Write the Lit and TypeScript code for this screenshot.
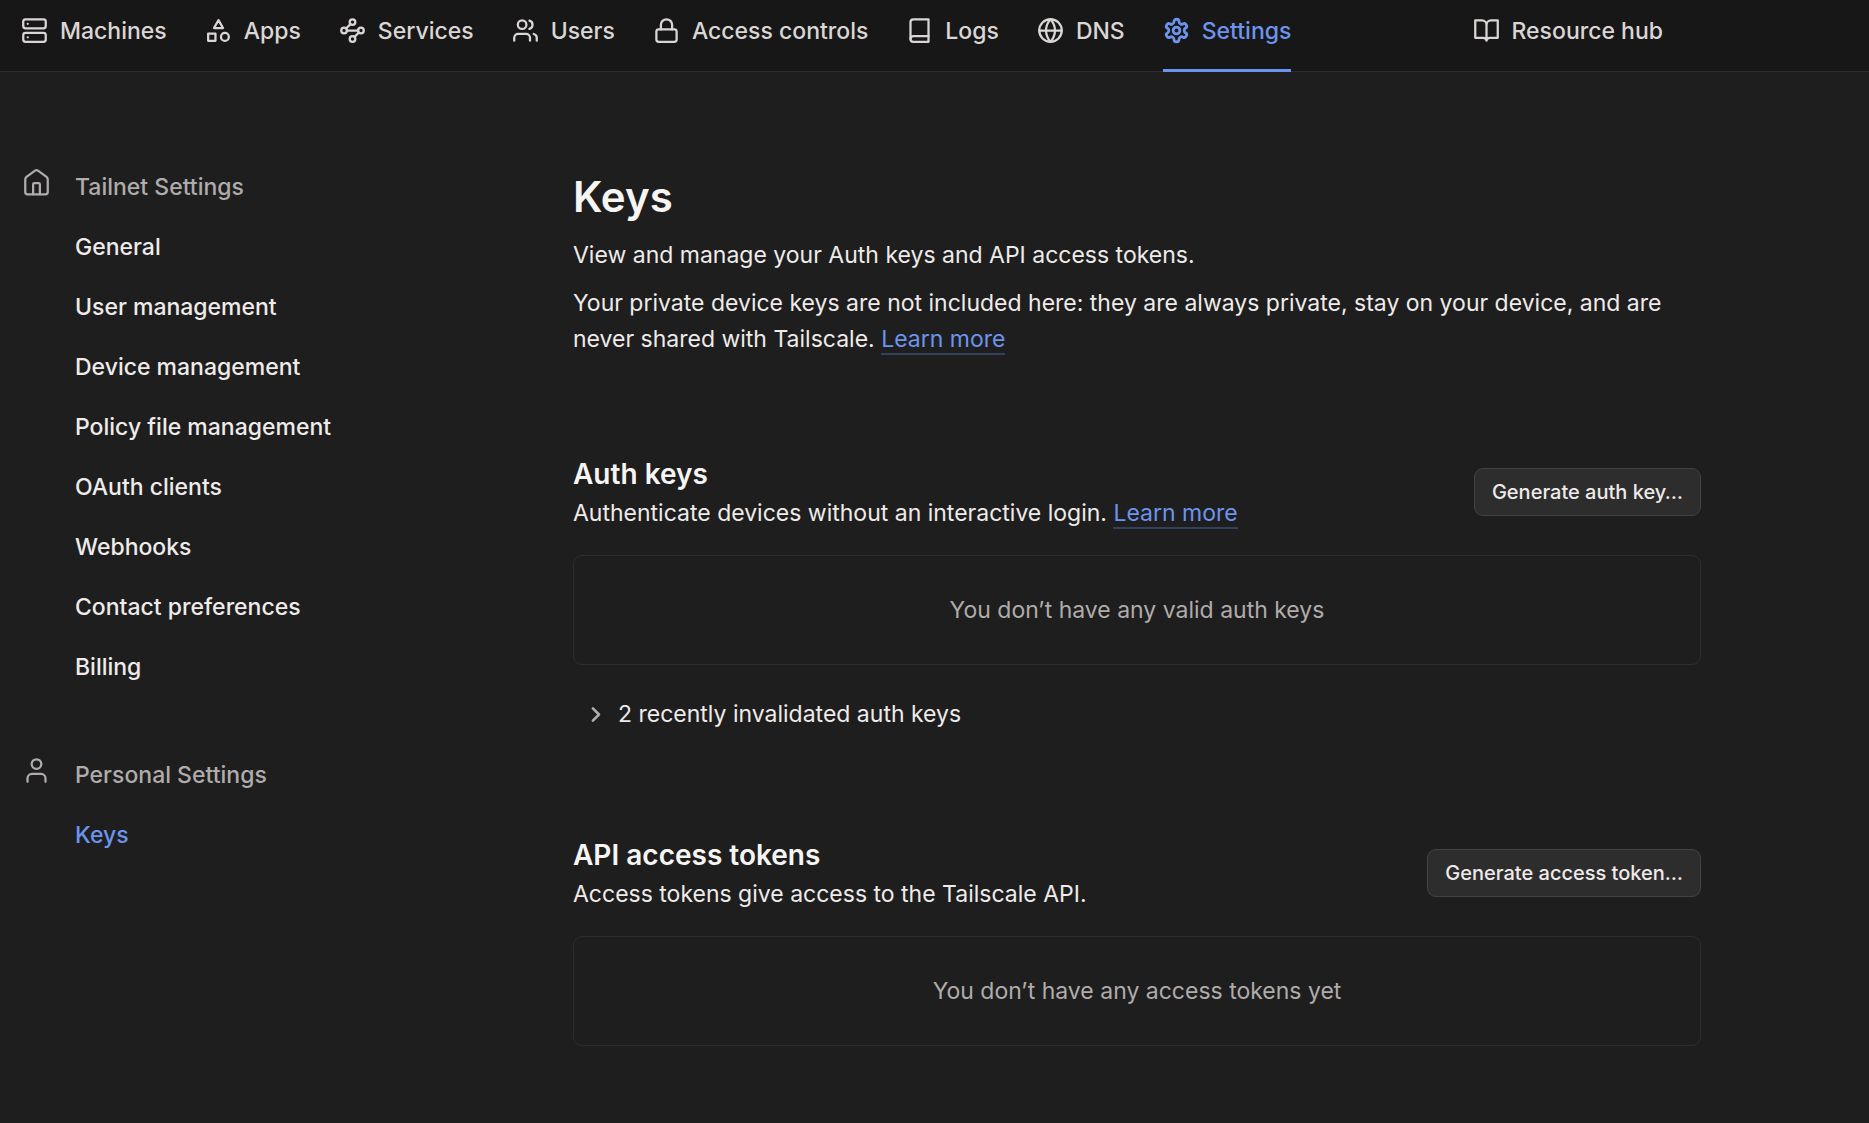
import { LitElement, html, svg, css, nothing } from "lit";
import { customElement } from "lit/decorators.js";

const icons: Record<string, unknown> = {
  server: svg`<rect x="2" y="2" width="20" height="8" rx="2"/><rect x="2" y="14" width="20" height="8" rx="2"/><path d="M6 6h.01M6 18h.01"/>`,
  apps: svg`<path d="M12 2.800 8 9.800h8z"/><rect x="2.800" y="14.700" width="6.500" height="6.500"/><circle cx="17.700" cy="17.700" r="3.500"/>`,
  services: svg`<circle cx="12" cy="4.500" r="2.500"/><circle cx="4.500" cy="12" r="2.500"/><circle cx="19.500" cy="12" r="2.500"/><circle cx="12" cy="19.500" r="2.500"/><path d="M7 12h10M6.300 10.200l3.900-3.900M13.800 17.700l3.900-3.900"/>`,
  users: svg`<path d="M16 21v-2.500a3.500 3.500 0 0 0-3.500-3.500h-7A3.500 3.500 0 0 0 2 18.500V21"/><circle cx="9" cy="6.800" r="3.800"/><path d="M22 21v-2.500a3.500 3.500 0 0 0-2.700-3.400M15.500 3.200a3.800 3.800 0 0 1 0 7.300"/>`,
  lock: svg`<rect x="3" y="11" width="18" height="11" rx="2"/><path d="M7 11V7a5 5 0 0 1 10 0v4"/>`,
  book: svg`<path d="M4 19.500A2.500 2.500 0 0 1 6.500 17H20"/><path d="M6.500 2H20v20H6.500A2.500 2.500 0 0 1 4 19.500v-15A2.500 2.500 0 0 1 6.500 2z"/>`,
  globe: svg`<circle cx="12" cy="12" r="10"/><path d="M2 12h20M12 2a15.300 15.300 0 0 1 4 10 15.300 15.300 0 0 1-4 10 15.300 15.300 0 0 1-4-10 15.300 15.300 0 0 1 4-10z"/>`,
  gear: svg`<circle cx="12" cy="12" r="3"/><path d="M12.22 2h-.44a2 2 0 0 0-2 2v.18a2 2 0 0 1-1 1.73l-.43.25a2 2 0 0 1-2 0l-.15-.08a2 2 0 0 0-2.73.73l-.22.38a2 2 0 0 0 .73 2.73l.15.1a2 2 0 0 1 1 1.72v.51a2 2 0 0 1-1 1.74l-.15.09a2 2 0 0 0-.73 2.73l.22.38a2 2 0 0 0 2.73.73l.15-.08a2 2 0 0 1 2 0l.43.25a2 2 0 0 1 1 1.73V20a2 2 0 0 0 2 2h.44a2 2 0 0 0 2-2v-.18a2 2 0 0 1 1-1.73l.43-.25a2 2 0 0 1 2 0l.15.08a2 2 0 0 0 2.73-.73l.22-.39a2 2 0 0 0-.73-2.73l-.15-.08a2 2 0 0 1-1-1.74v-.5a2 2 0 0 1 1-1.74l.15-.09a2 2 0 0 0 .73-2.73l-.22-.38a2 2 0 0 0-2.73-.73l-.15.08a2 2 0 0 1-2 0l-.43-.25a2 2 0 0 1-1-1.73V4a2 2 0 0 0-2-2z"/>`,
  openBook: svg`<path d="M2 3h6a4 4 0 0 1 4 4v14a3 3 0 0 0-3-2.500H2zM22 3h-6a4 4 0 0 0-4 4v14a3 3 0 0 1 3-2.500h7z"/>`,
  home: svg`<path d="M2 9.300a3 3 0 0 1 1.100-2.300L10.700 1.500a2 2 0 0 1 2.600 0L20.900 7a3 3 0 0 1 1.100 2.300V20.500a2 2 0 0 1-2 2H4a2 2 0 0 1-2-2z"/><path d="M9 22.500V13.500a1 1 0 0 1 1-1h4a1 1 0 0 1 1 1v9"/>`,
  user: svg`<path d="M20 22v-3a4 4 0 0 0-4-4H8a4 4 0 0 0-4 4v3"/><circle cx="12" cy="6.300" r="4.300"/>`,
  chevron: svg`<path d="M9 5l7 7-7 7"/>`,
};

const icon = (name: string) =>
  html`<svg class="icon ${name}" viewBox="0 0 24 24" aria-hidden="true">${icons[name]}</svg>`;

const tabs = [
  ["server", "Machines"],
  ["apps", "Apps"],
  ["services", "Services"],
  ["users", "Users"],
  ["lock", "Access controls"],
  ["book", "Logs"],
  ["globe", "DNS"],
  ["gear", "Settings"],
];

const groups = [
  {
    icon: "home",
    title: "Tailnet Settings",
    items: [
      "General",
      "User management",
      "Device management",
      "Policy file management",
      "OAuth clients",
      "Webhooks",
      "Contact preferences",
      "Billing",
    ],
  },
  { icon: "user", title: "Personal Settings", items: ["Keys"] },
];

@customElement("app-root")
export class AppRoot extends LitElement {
  static styles = css`
    :host {
      display: block;
      min-height: 100vh;
      box-sizing: border-box;
      background: #1f1e1e;
      color: #eeebea;
      font: 400 23px/36px Inter, "Liberation Sans", sans-serif;
    }
    * { box-sizing: border-box; }
    a { color: inherit; text-decoration: none; }
    h1, h2, p, ul { margin: 0; padding: 0; }
    ul { list-style: none; }
    .icon {
      flex: none;
      width: 27px;
      height: 27px;
      overflow: visible;
      fill: none;
      stroke: currentColor;
      stroke-width: 2;
      stroke-linecap: round;
      stroke-linejoin: round;
    }
    .topbar {
      display: flex;
      height: 72px;
      padding: 0 206px 0 21px;
      background: #181717;
      border-bottom: 1px solid #2e2d2d;
      color: #dad6d5;
      font-weight: 500;
    }
    .tabs { display: flex; gap: 38px; }
    .tab {
      display: flex;
      align-items: center;
      gap: 12px;
      height: 72px;
      padding-bottom: 8px;
      border-bottom: 3px solid transparent;
      white-space: nowrap;
    }
    .tab.active { color: #6d94ec; border-color: #6d94ec; }
    .tab.active .icon { stroke-width: 2.5; }
    .hub { margin-left: auto; }
    .page {
      display: grid;
      grid-template-columns: 552px minmax(0, 1128px);
      padding: 97px 21px 77px;
    }
    .sidebar {
      display: flex;
      flex-direction: column;
      gap: 72px;
      padding-left: 2px;
      font-weight: 500;
    }
    .group { display: grid; grid-template-columns: 27px 1fr; gap: 0 25px; }
    .sidebar .icon { color: #afacab; }
    .group-title { color: #afacab; font-size: 23px; font-weight: 500; line-height: 36px; }
    .links { grid-column: 2; }
    .links a { display: block; padding-top: 24px; }
    .links .current { color: #6d94ec; }
    h1 { font-size: 42px; line-height: 56px; font-weight: 600; color: #f7f5f4; }
    h2 { font-size: 28px; line-height: 36px; font-weight: 600; color: #f7f5f4; }
    .intro { display: flex; flex-direction: column; gap: 12px; }
    .more { color: #6d94ec; border-bottom: 2px solid #33415f; }
    .section { margin-top: 99px; }
    .section-head {
      display: flex;
      justify-content: space-between;
      align-items: center;
      margin-bottom: 24px;
    }
    .section-text { display: flex; flex-direction: column; gap: 3px; }
    .button {
      height: 48px;
      padding: 0 17px;
      border: 1px solid #434242;
      border-radius: 9px;
      background: #2e2d2d;
      color: #eeebea;
      font: 500 20px/30px Inter, "Liberation Sans", sans-serif;
    }
    .section-head .button { margin-bottom: 4px; }
    .empty {
      padding: 36px;
      border: 1px solid #2e2d2d;
      border-radius: 9px;
      color: #afacab;
      text-align: center;
    }
    .toggle {
      display: flex;
      align-items: center;
      gap: 12px;
      margin-top: 25px;
      padding: 6px 0 6px 12px;
      border: 0;
      background: none;
      color: inherit;
      font: inherit;
    }
    .toggle .icon { width: 21px; height: 21px; stroke-width: 3; color: #afacab; }
  `;

  private tab(name: string, label: string, extra = "") {
    const active = label === "Settings";
    return html`<a class="tab ${active ? "active" : ""} ${extra}" href="#"
      aria-current=${active ? "page" : nothing}>${icon(name)}<span>${label}</span></a>`;
  }

  private section(title: string, text: unknown, action: string, empty: string, footer: unknown = nothing) {
    return html`<section class="section">
      <div class="section-head">
        <div class="section-text"><h2>${title}</h2><p>${text}</p></div>
        <button class="button" type="button">${action}</button>
      </div>
      <div class="empty">${empty}</div>
      ${footer}
    </section>`;
  }

  render() {
    const more = html`<a class="more" href="#">Learn more</a>`;
    return html`
      <header class="topbar">
        <nav class="tabs" aria-label="Main">${tabs.map(([n, l]) => this.tab(n, l))}</nav>
        ${this.tab("openBook", "Resource hub", "hub")}
      </header>
      <div class="page">
        <nav class="sidebar" aria-label="Settings">
          ${groups.map((g) => html`<div class="group">
            ${icon(g.icon)}
            <h2 class="group-title">${g.title}</h2>
            <ul class="links">
              ${g.items.map((i) => html`<li><a class=${i === "Keys" ? "current" : "link"} href="#">${i}</a></li>`)}
            </ul>
          </div>`)}
        </nav>
        <main>
          <div class="intro">
            <h1>Keys</h1>
            <p>View and manage your Auth keys and API access tokens.</p>
            <p>Your private device keys are not included here: they are always private, stay on your device, and are never shared with Tailscale. ${more}</p>
          </div>
          ${this.section(
            "Auth keys",
            html`Authenticate devices without an interactive login. ${more}`,
            "Generate auth key…",
            "You don’t have any valid auth keys",
            html`<button class="toggle" type="button" aria-expanded="false">${icon("chevron")}2 recently invalidated auth keys</button>`
          )}
          ${this.section(
            "API access tokens",
            "Access tokens give access to the Tailscale API.",
            "Generate access token…",
            "You don’t have any access tokens yet"
          )}
        </main>
      </div>
    `;
  }
}
